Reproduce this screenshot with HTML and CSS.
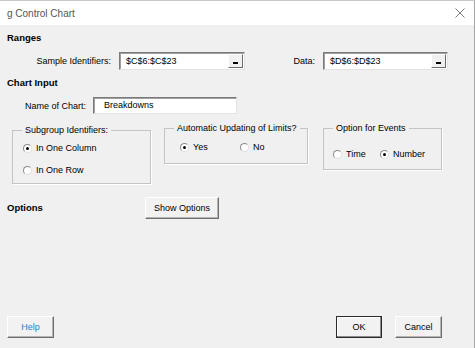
FILE: index.html
```html
<!DOCTYPE html>
<html lang="en">
<head>
    <meta charset="UTF-8">
    <title>g Control Chart</title>
    <link rel="stylesheet" href="styles.css">
</head>
<body>
    <div class="dialog">
        <div class="titlebar">
            <span class="title">g Control Chart</span>
            <svg class="close" width="10" height="10" viewBox="0 0 10 10">
                <path d="M0.5 0.5 L9.5 9.5 M9.5 0.5 L0.5 9.5" stroke="#7a7a7a" stroke-width="1" fill="none"/>
            </svg>
        </div>

        <div class="content">
            <h2 class="section">Ranges</h2>
            <div class="range-row">
                <label class="lbl lbl-sample">Sample Identifiers:</label>
                <div class="refedit ref-sample">
                    <span class="ref-text">$C$6:$C$23</span>
                    <span class="ref-btn"><i></i></span>
                </div>
                <label class="lbl lbl-data">Data:</label>
                <div class="refedit ref-data">
                    <span class="ref-text">$D$6:$D$23</span>
                    <span class="ref-btn"><i></i></span>
                </div>
            </div>

            <h2 class="section section-chart">Chart Input</h2>
            <div class="name-row">
                <label class="lbl lbl-name">Name of Chart:</label>
                <div class="textbox">Breakdowns</div>
            </div>

            <div class="groups">
                <fieldset class="group group-subgroup">
                    <legend>Subgroup Identifiers:</legend>
                    <div class="radio-col">
                        <span class="radio"><span class="dot checked"></span>In One Column</span>
                        <span class="radio"><span class="dot"></span>In One Row</span>
                    </div>
                </fieldset>
                <fieldset class="group group-auto">
                    <legend>Automatic Updating of Limits?</legend>
                    <div class="radio-row">
                        <span class="radio opt-yes"><span class="dot checked"></span>Yes</span>
                        <span class="radio"><span class="dot"></span>No</span>
                    </div>
                </fieldset>
                <fieldset class="group group-events">
                    <legend>Option for Events</legend>
                    <div class="radio-row">
                        <span class="radio opt-time"><span class="dot"></span>Time</span>
                        <span class="radio"><span class="dot checked"></span>Number</span>
                    </div>
                </fieldset>
            </div>

            <div class="options-row">
                <h2 class="section">Options</h2>
                <button class="btn btn-show">Show Options</button>
            </div>
        </div>

        <div class="footer">
            <button class="btn btn-help">Help</button>
            <div class="spacer"></div>
            <button class="btn btn-ok">OK</button>
            <button class="btn btn-cancel">Cancel</button>
        </div>
    </div>
</body>
</html>
```

FILE: styles.css
```css
* {
    box-sizing: border-box;
    margin: 0;
    padding: 0;
}
body {
    font-family: 'Liberation Sans', Arial, sans-serif;
    font-size: 9px;
    color: #000;
    background-color: #f0f0f0;
}
.dialog {
    width: 475px;
    height: 348px;
    display: flex;
    flex-direction: column;
    background-color: #f0f0f0;
    border-right: 1px solid #a6a6a6;
    border-top: 1px solid #c8c8c8;
}
.titlebar {
    height: 24px;
    background-color: #fff;
    display: flex;
    align-items: center;
    justify-content: space-between;
    padding: 0 9px 0 7px;
}
.title {
    font-size: 10px;
    color: #555;
}
.content {
    padding: 6px 0 0 7px;
}
.section {
    font-size: 9.5px;
    font-weight: bold;
    line-height: 14px;
    height: 14px;
}
.lbl {
    display: block;
    text-align: right;
    line-height: 12px;
}
.range-row {
    display: flex;
    align-items: center;
    height: 18px;
    margin-top: 7px;
}
.lbl-sample {
    width: 104px;
}
.ref-sample {
    margin-left: 8px;
    width: 126px;
}
.lbl-data {
    width: 70px;
}
.ref-data {
    margin-left: 8px;
    width: 125px;
}
.refedit {
    height: 18px;
    background-color: #fff;
    border: 1px solid;
    border-color: #7a7a7a #e3e3e3 #e3e3e3 #7a7a7a;
    box-shadow: inset 1px 1px 0 #a0a0a0;
    display: flex;
    align-items: center;
    justify-content: space-between;
    padding: 0 1px 0 6px;
}
.ref-btn {
    width: 15px;
    height: 14px;
    background-color: #f0f0f0;
    border: 1px solid;
    border-color: #fff #6a6a6a #6a6a6a #fff;
    display: flex;
    align-items: flex-end;
    justify-content: center;
    padding-bottom: 3px;
}
.ref-btn i {
    display: block;
    width: 5px;
    height: 2px;
    background-color: #000;
}
.section-chart {
    margin-top: 6px;
}
.name-row {
    display: flex;
    align-items: center;
    height: 17px;
    margin-top: 7px;
}
.lbl-name {
    width: 79px;
}
.textbox {
    margin-left: 7px;
    width: 144px;
    height: 17px;
    background-color: #fff;
    border: 1px solid;
    border-color: #7a7a7a #e3e3e3 #e3e3e3 #7a7a7a;
    box-shadow: inset 1px 1px 0 #a0a0a0;
    line-height: 15px;
    padding-left: 10px;
}
.groups {
    display: flex;
    align-items: flex-start;
    margin-top: 10px;
}
.group {
    border: 1px solid #c4c4c4;
    box-shadow: 1px 1px 0 #fff;
}
.group legend {
    margin-left: 9px;
    padding: 0 3px;
    line-height: 12px;
}
.group-subgroup {
    margin-left: 5px;
    width: 139px;
    height: 60px;
}
.group-auto {
    margin-left: 13px;
    width: 144px;
    height: 42px;
    margin-top: -2px;
}
.group-events {
    margin-left: 15px;
    width: 119px;
    height: 48px;
    margin-top: -2px;
}
.radio {
    display: flex;
    align-items: center;
    line-height: 12px;
}
.dot {
    width: 9px;
    height: 9px;
    border-radius: 50%;
    background-color: #fff;
    border: 1px solid;
    border-color: #8a8a8a #e0e0e0 #e0e0e0 #8a8a8a;
    margin-right: 4px;
    display: flex;
    align-items: center;
    justify-content: center;
}
.dot.checked::after {
    content: '';
    width: 3px;
    height: 3px;
    border-radius: 50%;
    background-color: #000;
}
.radio-col {
    display: flex;
    flex-direction: column;
    gap: 10px;
    padding: 6px 0 0 10px;
}
.radio-row {
    display: flex;
    padding: 7px 0 0 15px;
}
.opt-yes {
    width: 60px;
}
.group-events .radio-row {
    padding: 14px 0 0 9px;
}
.opt-time {
    width: 47px;
}
.options-row {
    display: flex;
    align-items: center;
    margin-top: 13px;
}
.options-row .section {
    width: 138px;
}
.btn {
    font-family: 'Liberation Sans', Arial, sans-serif;
    font-size: 9px;
    color: #000;
    background-color: #f2f2f2;
    border: 1px solid;
    border-color: #fff #6e6e6e #6e6e6e #fff;
    box-shadow: inset -1px -1px 0 #b4b4b4;
    height: 22px;
}
.btn-show {
    width: 74px;
}
.footer {
    margin-top: auto;
    display: flex;
    align-items: center;
    padding: 0 32px 10px 7px;
}
.spacer {
    flex: 1;
}
.btn-help {
    width: 47px;
    color: #2f7bd6;
}
.btn-ok {
    width: 46px;
    border-color: #2b2b2b;
    box-shadow: inset -1px -1px 0 #8a8a8a, inset 1px 1px 0 #fff;
}
.btn-cancel {
    width: 47px;
    margin-left: 13px;
}
```
